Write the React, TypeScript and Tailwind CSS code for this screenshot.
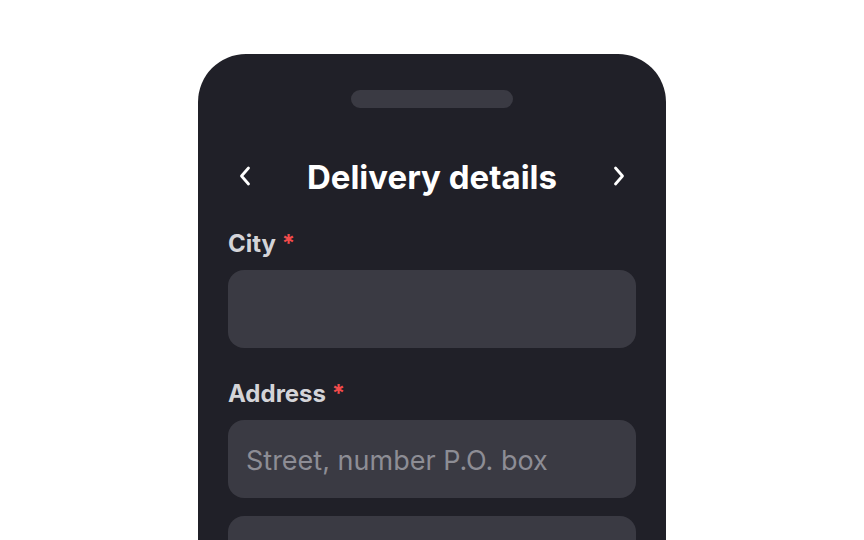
import React from "react";

function Chevron({ dir }: { dir: "left" | "right" }) {
  return (
    <svg width="14" height="22" viewBox="0 0 14 22" fill="none" className="shrink-0">
      <polyline
        points={dir === "left" ? "10.5,3 3.5,11 10.5,19" : "3.5,3 10.5,11 3.5,19"}
        stroke="#ffffff"
        strokeWidth="2.8"
        strokeLinecap="round"
        strokeLinejoin="round"
      />
    </svg>
  );
}

function Field({ label, placeholder }: { label: string; placeholder?: string }) {
  return (
    <div className="flex flex-col">
      <label className="h-[28px] text-[24px] leading-[28px] font-bold text-[#d4d4d8]">
        {label} <span className="text-[#f24b4b]">*</span>
      </label>
      <div className="mt-3 flex h-[78px] items-center rounded-2xl bg-[#3a3a43] px-[18px] pt-[2px]">
        {placeholder ? (
          <span className="text-[27px] leading-none text-[#8d8d95]">{placeholder}</span>
        ) : null}
      </div>
    </div>
  );
}

export default function App() {
  return (
    <div
      className="h-[540px] w-full overflow-hidden bg-white"
      style={{ fontFamily: "Inter, 'Noto Sans', sans-serif" }}
    >
      <div className="mx-auto mt-[54px] flex h-[600px] w-[468px] flex-col rounded-t-[48px] bg-[#202028] px-[30px] pt-9">
        <div className="mx-auto h-[18px] w-[162px] rounded-full bg-[#3a3a43]" />

        <div className="mt-12 flex h-10 items-center justify-between px-[10px]">
          <Chevron dir="left" />
          <h1 className="pt-[2px] text-[33px] leading-10 font-bold text-white">Delivery details</h1>
          <Chevron dir="right" />
        </div>

        <div className="mt-[34px]">
          <Field label="City" />
        </div>
        <div className="mt-8">
          <Field label="Address" placeholder="Street, number P.O. box" />
        </div>
        <div className="mt-[18px] h-[78px] rounded-2xl bg-[#3a3a43]" />
      </div>
    </div>
  );
}
